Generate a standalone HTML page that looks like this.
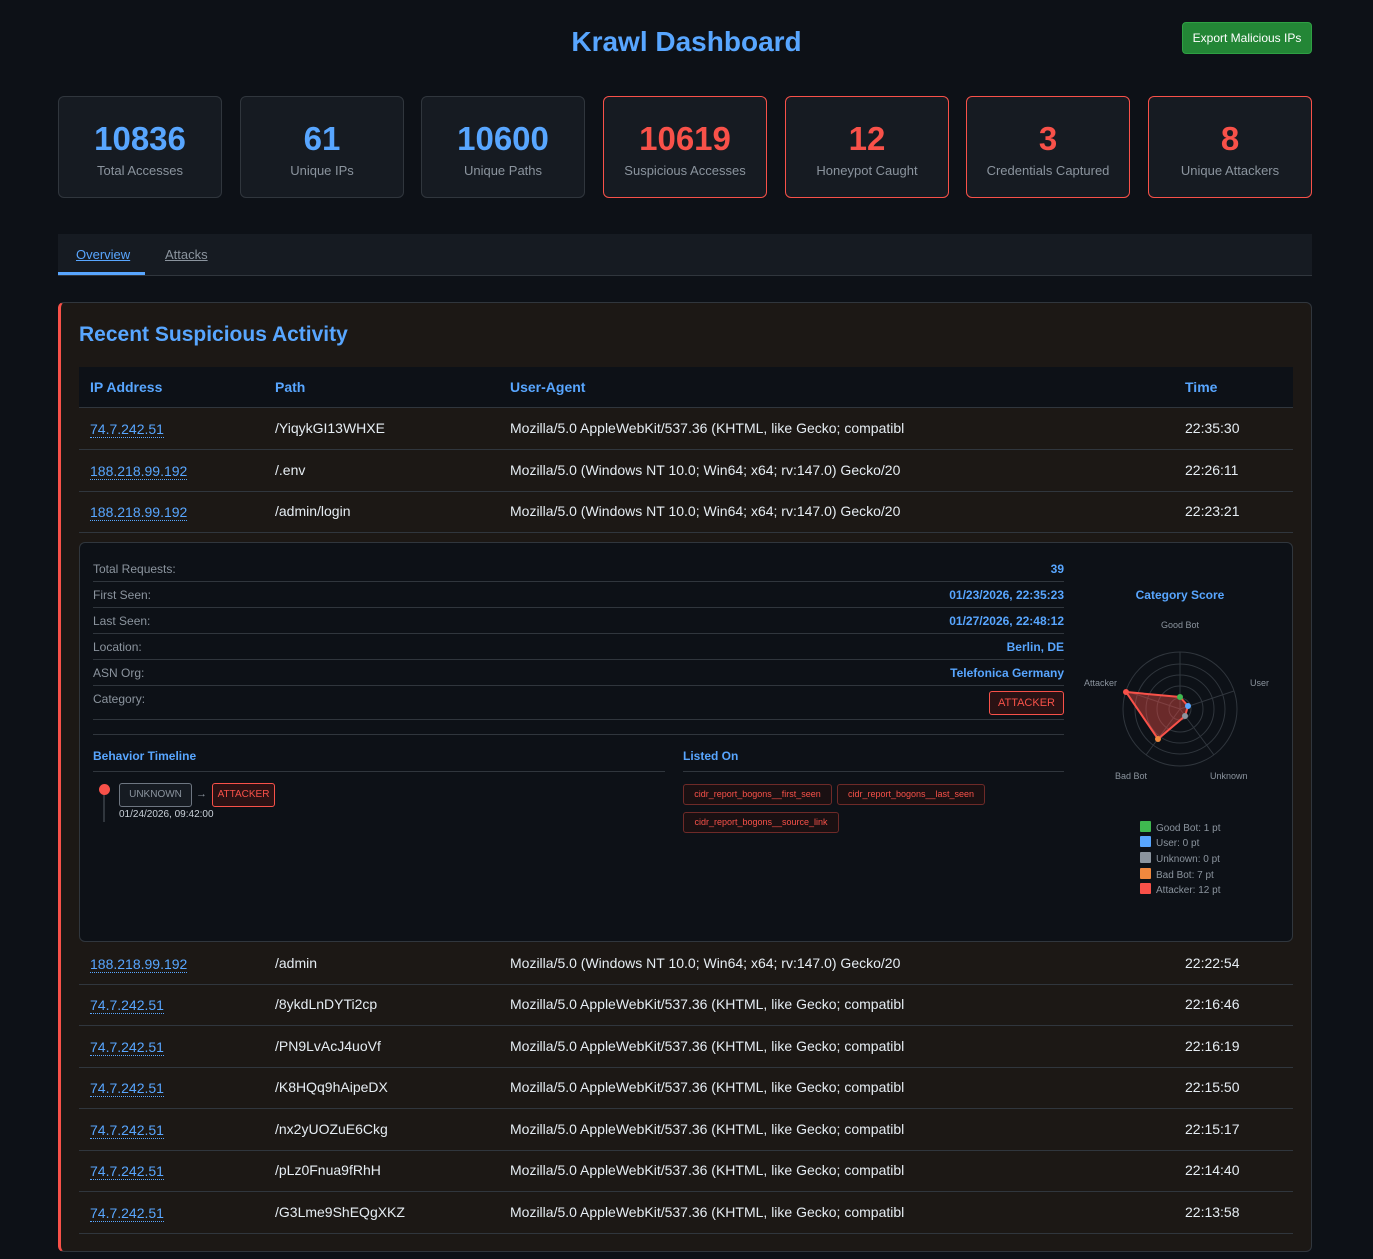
<!DOCTYPE html>
<html><head><meta charset="utf-8"><style>
*{box-sizing:border-box;margin:0;padding:0}
body{width:1373px;height:1259px;background:#0d1117;font-family:"Liberation Sans",sans-serif;color:#c9d1d9;position:relative;overflow:hidden}
.abs{position:absolute}
h1{position:absolute;left:0;width:1373px;top:26px;text-align:center;color:#58a6ff;font-size:28px;font-weight:bold}
.btn{left:1182px;top:22px;width:130px;height:32px;background:#238636;border:1px solid #2ea043;border-radius:4px;color:#fff;font-size:12px;text-align:center;line-height:30px}
.card{top:96px;width:164px;height:102px;background:#161b22;border:1px solid #30363d;border-radius:6px;text-align:center}
.card.r{border-color:#f85149}
.card .n{margin-top:22px;font-size:33px;font-weight:bold;color:#58a6ff;line-height:40px}
.card.r .n{color:#f85149}
.card .l{font-size:13px;color:#8b949e;margin-top:4px}
.tabs{left:58px;top:234px;width:1254px;height:42px;background:#161b22;border-bottom:1px solid #30363d}
.tab{top:0;height:42px;line-height:42px;font-size:13px;text-decoration:underline;color:#8b949e}
.panel{left:58px;top:302px;width:1254px;height:950px;background:#1c1815;border:1px solid #30363d;border-left:3px solid #f85149;border-radius:6px}
.ttl{left:79px;top:323px;font-size:21px;font-weight:bold;color:#58a6ff}
.th{left:79px;top:367px;width:1214px;height:41px;background:#0d1117;border-bottom:1px solid #30363d;color:#58a6ff;font-weight:bold;font-size:14px}
.row{left:79px;width:1214px;height:42px;border-bottom:1px solid #30363d;font-size:14px;color:#e6edf3}
.row span,.th span{position:absolute;top:0;line-height:41px}
.ip{color:#58a6ff;border-bottom:1px dotted #58a6ff;line-height:16px!important;top:13px!important}
.det{left:79px;top:542px;width:1214px;height:400px;background:#0d1117;border:1px solid #30363d;border-radius:6px}
.dr{left:93px;width:971px;height:26px;border-bottom:1px solid #30363d;font-size:12px;color:#8b949e;line-height:26px}
.dr b{position:absolute;right:0;top:0;color:#58a6ff;font-weight:bold}
.tag{font-size:9px;color:#f85149;border:1px solid #6e2a28;border-radius:3px;height:21px;line-height:19px;background:#1a1012;text-align:center;white-space:nowrap;overflow:hidden}
.lg{font-size:10px;color:#8b949e;left:1140px}
.lg i{display:inline-block;width:11px;height:11px;vertical-align:-1px;margin-right:5px;border-radius:1px}
</style></head><body>
<h1>Krawl Dashboard</h1>
<div class="abs btn">Export Malicious IPs</div>
<div class="abs card" style="left:58px"><div class="n">10836</div><div class="l">Total Accesses</div></div>
<div class="abs card" style="left:240px"><div class="n">61</div><div class="l">Unique IPs</div></div>
<div class="abs card" style="left:421px"><div class="n">10600</div><div class="l">Unique Paths</div></div>
<div class="abs card r" style="left:603px"><div class="n">10619</div><div class="l">Suspicious Accesses</div></div>
<div class="abs card r" style="left:785px"><div class="n">12</div><div class="l">Honeypot Caught</div></div>
<div class="abs card r" style="left:966px"><div class="n">3</div><div class="l">Credentials Captured</div></div>
<div class="abs card r" style="left:1148px"><div class="n">8</div><div class="l">Unique Attackers</div></div>
<div class="abs tabs">
<div class="abs tab" style="left:18px;color:#58a6ff">Overview</div>
<div class="abs" style="left:0;top:38px;width:87px;height:3px;background:#58a6ff"></div>
<div class="abs tab" style="left:107px">Attacks</div>
</div>
<div class="abs panel"></div>
<div class="abs ttl">Recent Suspicious Activity</div>
<div class="abs th"><span style="left:11px">IP Address</span><span style="left:196px">Path</span><span style="left:431px">User-Agent</span><span style="left:1106px">Time</span></div>

<div class="abs row" style="top:408px"><span class="ip" style="left:11px">74.7.242.51</span><span style="left:196px">/YiqykGI13WHXE</span><span style="left:431px">Mozilla/5.0 AppleWebKit/537.36 (KHTML, like Gecko; compatibl</span><span style="left:1106px">22:35:30</span></div>
<div class="abs row" style="top:450px"><span class="ip" style="left:11px">188.218.99.192</span><span style="left:196px">/.env</span><span style="left:431px">Mozilla/5.0 (Windows NT 10.0; Win64; x64; rv:147.0) Gecko/20</span><span style="left:1106px">22:26:11</span></div>
<div class="abs row" style="top:491px"><span class="ip" style="left:11px">188.218.99.192</span><span style="left:196px">/admin/login</span><span style="left:431px">Mozilla/5.0 (Windows NT 10.0; Win64; x64; rv:147.0) Gecko/20</span><span style="left:1106px">22:23:21</span></div>

<div class="abs det"></div>
<div class="abs dr" style="top:556px">Total Requests:<b>39</b></div>
<div class="abs dr" style="top:582px">First Seen:<b>01/23/2026, 22:35:23</b></div>
<div class="abs dr" style="top:608px">Last Seen:<b>01/27/2026, 22:48:12</b></div>
<div class="abs dr" style="top:634px">Location:<b>Berlin, DE</b></div>
<div class="abs dr" style="top:660px">ASN Org:<b>Telefonica Germany</b></div>
<div class="abs dr" style="top:686px;height:34px">Category:<span class="abs" style="right:0;top:5px;height:24px;line-height:22px;padding:0 8px;border:1px solid #f85149;border-radius:3px;color:#f85149;background:#2a1214;font-size:11px">ATTACKER</span></div>
<div class="abs" style="left:93px;top:734px;width:971px;height:1px;background:#30363d"></div>
<div class="abs" style="left:93px;top:749px;font-size:12px;font-weight:bold;color:#58a6ff">Behavior Timeline</div>
<div class="abs" style="left:93px;top:771px;width:572px;height:1px;background:#30363d"></div>
<div class="abs" style="left:683px;top:749px;font-size:12px;font-weight:bold;color:#58a6ff">Listed On</div>
<div class="abs" style="left:683px;top:771px;width:381px;height:1px;background:#30363d"></div>
<div class="abs" style="left:103px;top:790px;width:2px;height:32px;background:#30363d"></div>
<div class="abs" style="left:99px;top:784px;width:11px;height:11px;border-radius:50%;background:#f85149"></div>
<div class="abs" style="left:119px;top:783px;width:73px;text-align:center;height:24px;line-height:22px;border:1px solid #6e7681;border-radius:3px;color:#8b949e;font-size:10px;background:#161b22">UNKNOWN</div>
<div class="abs" style="left:196px;top:788px;font-size:11px;color:#8b949e">→</div>
<div class="abs" style="left:212px;top:783px;width:63px;text-align:center;height:24px;line-height:22px;border:1px solid #f85149;border-radius:3px;color:#f85149;font-size:10px;background:#2a1214">ATTACKER</div>
<div class="abs" style="left:119px;top:809px;font-size:10px;color:#c9d1d9">01/24/2026, 09:42:00</div>
<div class="abs tag" style="left:683px;top:784px;width:149px">cidr_report_bogons__first_seen</div>
<div class="abs tag" style="left:837px;top:784px;width:148px">cidr_report_bogons__last_seen</div>
<div class="abs tag" style="left:683px;top:812px;width:156px">cidr_report_bogons__source_link</div>

<div class="abs" style="left:1080px;top:588px;width:200px;text-align:center;font-size:12px;font-weight:bold;color:#58a6ff">Category Score</div>
<svg class="abs" style="left:1070px;top:610px" width="220" height="180" viewBox="1070 610 220 180">
<g fill="none" stroke="#30363d" stroke-width="1">
<circle cx="1180" cy="709" r="57"/><circle cx="1180" cy="709" r="45"/><circle cx="1180" cy="709" r="34"/><circle cx="1180" cy="709" r="23"/><circle cx="1180" cy="709" r="11"/>
<line x1="1180" y1="709" x2="1180" y2="652"/><line x1="1180" y1="709" x2="1234" y2="691"/><line x1="1180" y1="709" x2="1214" y2="755"/><line x1="1180" y1="709" x2="1146" y2="755"/><line x1="1180" y1="709" x2="1126" y2="691"/>
</g>
<polygon points="1180,697 1188,706 1185,716 1158,739 1126,692" fill="rgba(248,81,73,0.4)" stroke="#f85149" stroke-width="2"/>
<circle cx="1180" cy="697" r="3" fill="#3fb950"/><circle cx="1188" cy="706" r="3" fill="#58a6ff"/><circle cx="1185" cy="716" r="3" fill="#8b949e"/><circle cx="1158" cy="739" r="3" fill="#f0883e"/><circle cx="1126" cy="692" r="3" fill="#f85149"/>
<g font-family="Liberation Sans,sans-serif" font-size="9" fill="#8b949e">
<text x="1180" y="628" text-anchor="middle">Good Bot</text><text x="1250" y="686">User</text><text x="1210" y="779">Unknown</text><text x="1115" y="779">Bad Bot</text><text x="1084" y="686">Attacker</text>
</g></svg>
<div class="abs lg" style="top:821px"><i style="background:#3fb950"></i>Good Bot: 1 pt</div>
<div class="abs lg" style="top:836px"><i style="background:#58a6ff"></i>User: 0 pt</div>
<div class="abs lg" style="top:852px"><i style="background:#8b949e"></i>Unknown: 0 pt</div>
<div class="abs lg" style="top:868px"><i style="background:#f0883e"></i>Bad Bot: 7 pt</div>
<div class="abs lg" style="top:883px"><i style="background:#f85149"></i>Attacker: 12 pt</div>

<div class="abs row" style="top:943px"><span class="ip" style="left:11px">188.218.99.192</span><span style="left:196px">/admin</span><span style="left:431px">Mozilla/5.0 (Windows NT 10.0; Win64; x64; rv:147.0) Gecko/20</span><span style="left:1106px">22:22:54</span></div>
<div class="abs row" style="top:984px"><span class="ip" style="left:11px">74.7.242.51</span><span style="left:196px">/8ykdLnDYTi2cp</span><span style="left:431px">Mozilla/5.0 AppleWebKit/537.36 (KHTML, like Gecko; compatibl</span><span style="left:1106px">22:16:46</span></div>
<div class="abs row" style="top:1026px"><span class="ip" style="left:11px">74.7.242.51</span><span style="left:196px">/PN9LvAcJ4uoVf</span><span style="left:431px">Mozilla/5.0 AppleWebKit/537.36 (KHTML, like Gecko; compatibl</span><span style="left:1106px">22:16:19</span></div>
<div class="abs row" style="top:1067px"><span class="ip" style="left:11px">74.7.242.51</span><span style="left:196px">/K8HQq9hAipeDX</span><span style="left:431px">Mozilla/5.0 AppleWebKit/537.36 (KHTML, like Gecko; compatibl</span><span style="left:1106px">22:15:50</span></div>
<div class="abs row" style="top:1109px"><span class="ip" style="left:11px">74.7.242.51</span><span style="left:196px">/nx2yUOZuE6Ckg</span><span style="left:431px">Mozilla/5.0 AppleWebKit/537.36 (KHTML, like Gecko; compatibl</span><span style="left:1106px">22:15:17</span></div>
<div class="abs row" style="top:1150px"><span class="ip" style="left:11px">74.7.242.51</span><span style="left:196px">/pLz0Fnua9fRhH</span><span style="left:431px">Mozilla/5.0 AppleWebKit/537.36 (KHTML, like Gecko; compatibl</span><span style="left:1106px">22:14:40</span></div>
<div class="abs row" style="top:1192px"><span class="ip" style="left:11px">74.7.242.51</span><span style="left:196px">/G3Lme9ShEQgXKZ</span><span style="left:431px">Mozilla/5.0 AppleWebKit/537.36 (KHTML, like Gecko; compatibl</span><span style="left:1106px">22:13:58</span></div>
</body></html>
